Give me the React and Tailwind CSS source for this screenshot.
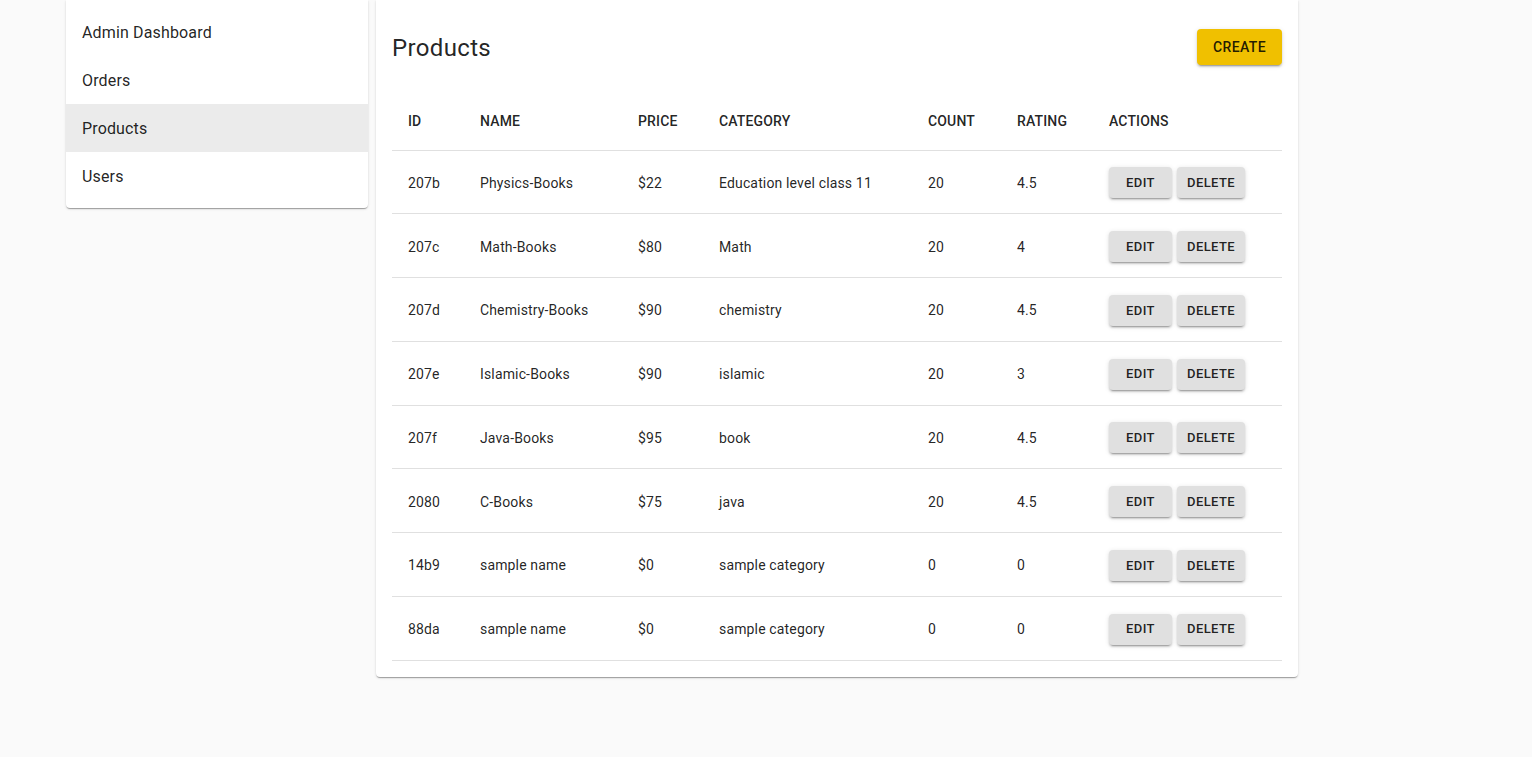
import React from 'react';

const PRODUCTS = [
    { id: '207b', name: 'Physics-Books', price: '$22', category: 'Education level class 11', count: 20, rating: 4.5 },
    { id: '207c', name: 'Math-Books', price: '$80', category: 'Math', count: 20, rating: 4 },
    { id: '207d', name: 'Chemistry-Books', price: '$90', category: 'chemistry', count: 20, rating: 4.5 },
    { id: '207e', name: 'Islamic-Books', price: '$90', category: 'islamic', count: 20, rating: 3 },
    { id: '207f', name: 'Java-Books', price: '$95', category: 'book', count: 20, rating: 4.5 },
    { id: '2080', name: 'C-Books', price: '$75', category: 'java', count: 20, rating: 4.5 },
    { id: '14b9', name: 'sample name', price: '$0', category: 'sample category', count: 0, rating: 0 },
    { id: '88da', name: 'sample name', price: '$0', category: 'sample category', count: 0, rating: 0 },
];

const MENU = ['Admin Dashboard', 'Orders', 'Products', 'Users'];

const cardShadow = 'shadow-[0_2px_1px_-1px_rgba(0,0,0,0.2),0_1px_1px_0_rgba(0,0,0,0.14),0_1px_3px_0_rgba(0,0,0,0.12)]';
const btnShadow = 'shadow-[0_3px_1px_-2px_rgba(0,0,0,0.2),0_2px_2px_0_rgba(0,0,0,0.14),0_1px_5px_0_rgba(0,0,0,0.12)]';

const ActionButton = ({ children, className }) => (
    <button className={`h-[31px] rounded bg-[#e0e0e0] pt-px text-[13px] font-medium tracking-[0.4px] uppercase text-[rgba(0,0,0,0.87)] ${btnShadow} ${className}`}>
        {children}
    </button>
);

const App = () => {
    return (
        <div className="min-h-[757px] bg-[#fafafa] font-['Roboto',sans-serif] tracking-[0.15px] text-[rgba(0,0,0,0.87)]">
            <div className="flex items-start gap-2 pl-[66px]">
                {/* Sidebar */}
                <div className={`w-[302px] rounded-b bg-white py-2 ${cardShadow}`}>
                    {MENU.map(item => (
                        <div key={item} className={`flex h-12 items-center px-4 pt-0.5 text-base ${item === 'Products' ? 'bg-[#ebebeb]' : ''}`}>
                            {item}
                        </div>
                    ))}
                </div>

                {/* Products card */}
                <div className={`w-[922px] rounded-b bg-white px-4 pb-4 ${cardShadow}`}>
                    <div className="flex items-center justify-between pt-[29px]">
                        <h1 className="-mb-px mt-px text-2xl leading-9 tracking-[0.35px] text-[rgba(0,0,0,0.87)]">Products</h1>
                        <button className={`h-9 w-[85px] rounded bg-[#f0c000] text-sm font-medium tracking-[0.4px] text-[rgba(0,0,0,0.87)] ${btnShadow}`}>
                            CREATE
                        </button>
                    </div>

                    <table className="mt-[28px] w-full table-fixed border-collapse text-sm">
                        <colgroup>
                            <col className="w-[72px]" />
                            <col className="w-[158px]" />
                            <col className="w-[81px]" />
                            <col className="w-[209px]" />
                            <col className="w-[89px]" />
                            <col className="w-[92px]" />
                            <col />
                        </colgroup>
                        <thead>
                            <tr className="h-[57px] border-b border-[#e0e0e0]">
                                {['ID', 'NAME', 'PRICE', 'CATEGORY', 'COUNT', 'RATING', 'ACTIONS'].map(h => (
                                    <th key={h} className="px-4 text-left font-medium">{h}</th>
                                ))}
                            </tr>
                        </thead>
                        <tbody>
                            {PRODUCTS.map(p => (
                                <tr key={p.id} className="h-[63.75px] border-b border-[#e0e0e0]">
                                    <td className="px-4 pt-0.5">{p.id}</td>
                                    <td className="px-4 pt-0.5">{p.name}</td>
                                    <td className="px-4 pt-0.5">{p.price}</td>
                                    <td className="px-4 pt-0.5">{p.category}</td>
                                    <td className="px-4 pt-0.5">{p.count}</td>
                                    <td className="px-4 pt-0.5">{p.rating}</td>
                                    <td className="px-4 pt-0.5">
                                        <div className="flex gap-[5px]">
                                            <ActionButton className="w-[63px]">Edit</ActionButton>
                                            <ActionButton className="w-[68px]">Delete</ActionButton>
                                        </div>
                                    </td>
                                </tr>
                            ))}
                        </tbody>
                    </table>
                </div>
            </div>
        </div>
    );
};

export default App;
